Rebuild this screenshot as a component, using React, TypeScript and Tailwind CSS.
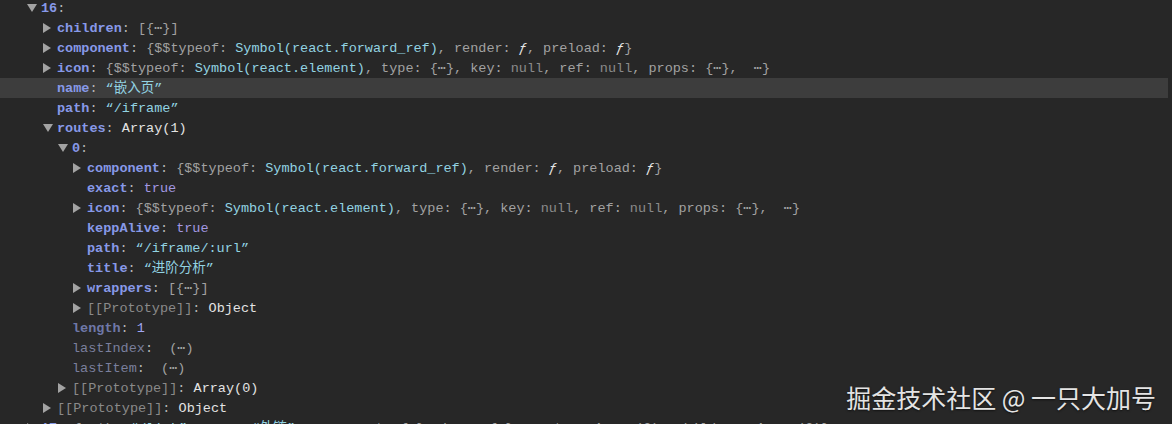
const pads = ["pl-[27px]", "pl-[43px]", "pl-[58px]", "pl-[73px]"]

type Kind = "key" | "dimKey" | "dimPlain" | "p" | "str" | "kw" | "num" | "nul" | "g" | "w" | "fn"

const kinds: Record<Kind, string> = {
  key: "text-[#8799e8] font-bold",
  dimKey: "text-[#6f78a8] font-bold",
  dimPlain: "text-[#7a7f9c]",
  p: "text-[#b4b4b4]",
  str: "text-[#92d3e2]",
  kw: "text-[#a398e2]",
  num: "text-[#a0a6f2]",
  nul: "text-[#8a8a8a]",
  g: "text-[#a2a2a2]",
  w: "text-[#e3e3e3]",
  fn: "text-[#e8e8e8] italic",
}

type Part = [Kind, string]
type Row = { level: number; arrow?: "r" | "d"; hl?: boolean; parts: Part[] }

const componentPreview: Part[] = [
  ["g", "{$$typeof: "],
  ["str", "Symbol(react.forward_ref)"],
  ["g", ", render: "],
  ["fn", "ƒ"],
  ["g", ", preload: "],
  ["fn", "ƒ"],
  ["g", "}"],
]

const iconPreview: Part[] = [
  ["g", "{$$typeof: "],
  ["str", "Symbol(react.element)"],
  ["g", ", type: {⋯}, key: "],
  ["nul", "null"],
  ["g", ", ref: "],
  ["nul", "null"],
  ["g", ", props: {⋯},  ⋯}"],
]

const rows: Row[] = [
  { level: 0, arrow: "d", parts: [["key", "16"], ["p", ":"]] },
  { level: 1, arrow: "r", parts: [["key", "children"], ["p", ": "], ["g", "[{⋯}]"]] },
  { level: 1, arrow: "r", parts: [["key", "component"], ["p", ": "], ...componentPreview] },
  { level: 1, arrow: "r", parts: [["key", "icon"], ["p", ": "], ...iconPreview] },
  { level: 1, hl: true, parts: [["key", "name"], ["p", ": "], ["str", "“嵌入页”"]] },
  { level: 1, parts: [["key", "path"], ["p", ": "], ["str", "“/iframe”"]] },
  { level: 1, arrow: "d", parts: [["key", "routes"], ["p", ": "], ["w", "Array(1)"]] },
  { level: 2, arrow: "d", parts: [["key", "0"], ["p", ":"]] },
  { level: 3, arrow: "r", parts: [["key", "component"], ["p", ": "], ...componentPreview] },
  { level: 3, parts: [["key", "exact"], ["p", ": "], ["kw", "true"]] },
  { level: 3, arrow: "r", parts: [["key", "icon"], ["p", ": "], ...iconPreview] },
  { level: 3, parts: [["key", "keppAlive"], ["p", ": "], ["kw", "true"]] },
  { level: 3, parts: [["key", "path"], ["p", ": "], ["str", "“/iframe/:url”"]] },
  { level: 3, parts: [["key", "title"], ["p", ": "], ["str", "“进阶分析”"]] },
  { level: 3, arrow: "r", parts: [["key", "wrappers"], ["p", ": "], ["g", "[{⋯}]"]] },
  { level: 3, arrow: "r", parts: [["nul", "[[Prototype]]"], ["p", ": "], ["w", "Object"]] },
  { level: 2, parts: [["dimKey", "length"], ["p", ": "], ["num", "1"]] },
  { level: 2, parts: [["dimPlain", "lastIndex"], ["p", ": "], ["g", " (⋯)"]] },
  { level: 2, parts: [["dimPlain", "lastItem"], ["p", ": "], ["g", " (⋯)"]] },
  { level: 2, arrow: "r", parts: [["nul", "[[Prototype]]"], ["p", ": "], ["w", "Array(0)"]] },
  { level: 1, arrow: "r", parts: [["nul", "[[Prototype]]"], ["p", ": "], ["w", "Object"]] },
  {
    level: 0,
    arrow: "r",
    parts: [
      ["key", "17"],
      ["p", ": "],
      ["g", "{path: "],
      ["str", "“/link”"],
      ["g", ", name: "],
      ["str", "“外链”"],
      ["g", ", component: {⋯}, icon: {⋯}, routes: Array(2), children: Array(2)}"],
    ],
  },
]

function Arrow({ dir }: { dir?: "r" | "d" }) {
  return (
    <span className="w-[14px] shrink-0 flex items-center">
      {dir === "r" && (
        <svg width="8" height="10" viewBox="0 0 8 10">
          <path d="M0 0 L8 5 L0 10 Z" fill="#a3a3a3" />
        </svg>
      )}
      {dir === "d" && (
        <svg width="10" height="8" viewBox="0 0 10 8">
          <path d="M0 0 L10 0 L5 8 Z" fill="#a3a3a3" />
        </svg>
      )}
    </span>
  )
}

export default function App() {
  return (
    <div className="relative w-[1172px] h-[424px] overflow-hidden bg-[#272727] font-['Liberation_Mono','DejaVu_Sans_Mono','Noto_Sans_CJK_SC',monospace] text-[13.5px]">
      <div className="-mt-[2px]">
        {rows.map((row, i) => (
          <div
            key={i}
            className={`flex items-center h-[20px] whitespace-pre mr-[4px] ${pads[row.level]} ${row.hl ? "bg-[#3d3d3d]" : ""}`}
          >
            <Arrow dir={row.arrow} />
            <span className="pt-[2px]">
              {row.parts.map(([k, t], j) => (
                <span key={j} className={kinds[k]}>
                  {t}
                </span>
              ))}
            </span>
          </div>
        ))}
      </div>
      {/* watermark */}
      <div className="absolute right-[16px] bottom-[14px] text-[25px] leading-none text-[#e4e4e4] font-['Noto_Sans_CJK_SC',sans-serif] [text-shadow:0_1px_2px_rgba(0,0,0,0.6)]">
        掘金技术社区 @ 一只大加号
      </div>
    </div>
  )
}
